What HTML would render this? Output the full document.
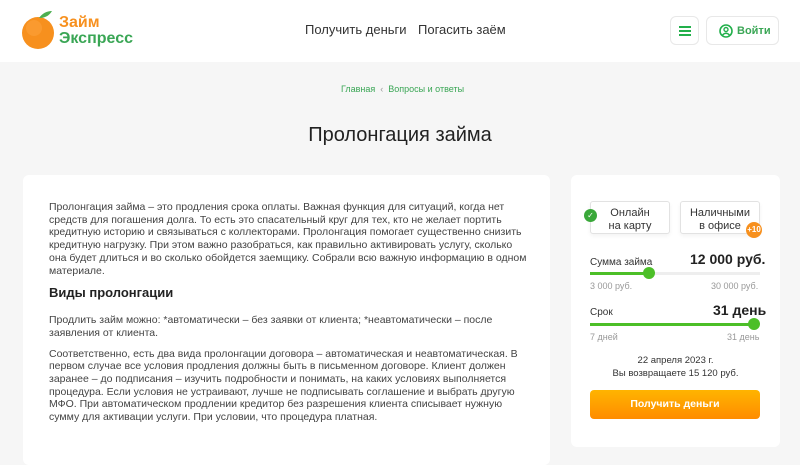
<!DOCTYPE html>
<html><head><meta charset="utf-8"><style>
*{margin:0;padding:0;box-sizing:border-box}
body{width:800px;height:455px;overflow:hidden;background:#f6f6f6;font-family:"Liberation Sans","DejaVu Sans",sans-serif;color:#333;position:relative}
.hdr{position:absolute;left:0;top:0;width:800px;height:62px;background:#fff}
.abs{position:absolute}
.nav{font-size:13px;color:#333;top:22px}
.btn{border:1px solid #e8e8e8;border-radius:6px;background:#fff}
.card{background:#fff;border-radius:6px}
p{font-size:10.5px;line-height:12.7px;color:#444}
.opt{border:1px solid #e2e2e2;border-radius:3px;background:#fff;font-size:11px;text-align:center;line-height:13px;padding-top:5px;color:#333;box-shadow:0 2px 4px rgba(0,0,0,.05)}
.sm{font-size:10px}
.gray{color:#999;font-size:9px}
</style></head><body>
<div class="hdr"></div>
<svg class="abs" style="left:20px;top:6px" width="36" height="44"><circle cx="18" cy="27" r="16" fill="#f7901e"/><circle cx="14" cy="22" r="8" fill="#fba23a" opacity=".6"/><path d="M19 12 Q24 5 32 5 Q28 12 19 12Z" fill="#4caf50"/></svg>
<div class="abs" style="left:59px;top:15px;font-size:16px;font-weight:bold;line-height:16px"><span style="color:#f7901e">Займ</span><br><span style="color:#3aa655">Экспресс</span></div>
<div class="abs nav" style="left:305px">Получить деньги</div>
<div class="abs nav" style="left:418px">Погасить заём</div>
<div class="abs btn" style="left:670px;top:16px;width:29px;height:29px"><div class="abs" style="left:8px;top:9px;width:12px;height:2px;background:#22b04b;box-shadow:0 4px 0 #22b04b,0 8px 0 #22b04b"></div></div>
<div class="abs btn" style="left:706px;top:16px;width:73px;height:29px"><svg class="abs" style="left:12px;top:7px" width="14" height="14"><circle cx="7" cy="7" r="6" fill="none" stroke="#22b04b" stroke-width="1.6"/><circle cx="7" cy="5.5" r="2" fill="none" stroke="#22b04b" stroke-width="1.4"/><path d="M3.5 11 Q7 7.5 10.5 11" fill="none" stroke="#22b04b" stroke-width="1.4"/></svg><div class="abs" style="left:30px;top:8px;font-size:11px;font-weight:bold;color:#3aa655">Войти</div></div>
<div class="abs" style="left:341px;top:84px;font-size:9px;color:#3aa655">Главная &nbsp;<span style="color:#999">‹</span>&nbsp; Вопросы и ответы</div>
<div class="abs" style="left:0;width:800px;top:124px;text-align:center;font-size:20px;color:#222">Пролонгация займа</div>
<div class="abs card" style="left:23px;top:175px;width:527px;height:290px"></div>
<div class="abs" style="left:49px;top:201px;width:480px">
<p>Пролонгация займа – это продления срока оплаты. Важная функция для ситуаций, когда нет средств для погашения долга. То есть это спасательный круг для тех, кто не желает портить кредитную историю и связываться с коллекторами. Пролонгация помогает существенно снизить кредитную нагрузку. При этом важно разобраться, как правильно активировать услугу, сколько она будет длиться и во сколько обойдется заемщику. Собрали всю важную информацию в одном материале.</p>
<div style="font-size:13px;font-weight:bold;color:#222;margin:8px 0 14px">Виды пролонгации</div>
<p>Продлить займ можно: *автоматически – без заявки от клиента; *неавтоматически – после заявления от клиента.</p>
<p style="margin-top:8px">Соответственно, есть два вида пролонгации договора – автоматическая и неавтоматическая. В первом случае все условия продления должны быть в письменном договоре. Клиент должен заранее – до подписания – изучить подробности и понимать, на каких условиях выполняется процедура. Если условия не устраивают, лучше не подписывать соглашение и выбрать другую МФО. При автоматическом продлении кредитор без разрешения клиента списывает нужную сумму для активации услуги. При условии, что процедура платная.</p>
</div>
<div class="abs card" style="left:571px;top:175px;width:209px;height:272px"></div>
<div class="abs opt" style="left:590px;top:201px;width:80px;height:33px">Онлайн<br>на карту</div>
<div class="abs" style="left:584px;top:209px;width:13px;height:13px;border-radius:50%;background:#3aa83a;color:#fff;font-size:8px;text-align:center;line-height:13px">✓</div>
<div class="abs opt" style="left:680px;top:201px;width:80px;height:33px">Наличными<br>в офисе</div>
<div class="abs" style="left:746px;top:222px;width:16px;height:16px;border-radius:50%;background:#f7901e;color:#fff;font-size:8px;text-align:center;line-height:16px;font-weight:bold">+10</div>
<div class="abs sm" style="left:590px;top:257px">Сумма займа</div>
<div class="abs" style="left:690px;top:251px;font-size:14px;font-weight:bold;color:#222">12 000 руб.</div>
<div class="abs" style="left:590px;top:272px;width:170px;height:3px;background:#eee"></div>
<div class="abs" style="left:590px;top:272px;width:58px;height:3px;background:#4cbf28"></div>
<div class="abs" style="left:643px;top:267px;width:12px;height:12px;border-radius:50%;background:#4cbf28"></div>
<div class="abs gray" style="left:590px;top:281px">3 000 руб.</div>
<div class="abs gray" style="left:711px;top:281px">30 000 руб.</div>
<div class="abs sm" style="left:590px;top:307px">Срок</div>
<div class="abs" style="left:713px;top:302px;font-size:14px;font-weight:bold;color:#222">31 день</div>
<div class="abs" style="left:590px;top:323px;width:165px;height:3px;background:#4cbf28"></div>
<div class="abs" style="left:748px;top:318px;width:12px;height:12px;border-radius:50%;background:#4cbf28"></div>
<div class="abs gray" style="left:590px;top:332px">7 дней</div>
<div class="abs gray" style="left:727px;top:332px">31 день</div>
<div class="abs" style="left:571px;top:354px;width:209px;text-align:center;font-size:9.5px;line-height:13px;color:#333">22 апреля 2023 г.<br>Вы возвращаете 15 120 руб.</div>
<div class="abs" style="left:590px;top:390px;width:170px;height:29px;border-radius:4px;background:linear-gradient(#ffb400,#ff8c00);color:#fff;font-weight:bold;font-size:10.5px;text-align:center;line-height:29px">Получить деньги</div>
</body></html>
